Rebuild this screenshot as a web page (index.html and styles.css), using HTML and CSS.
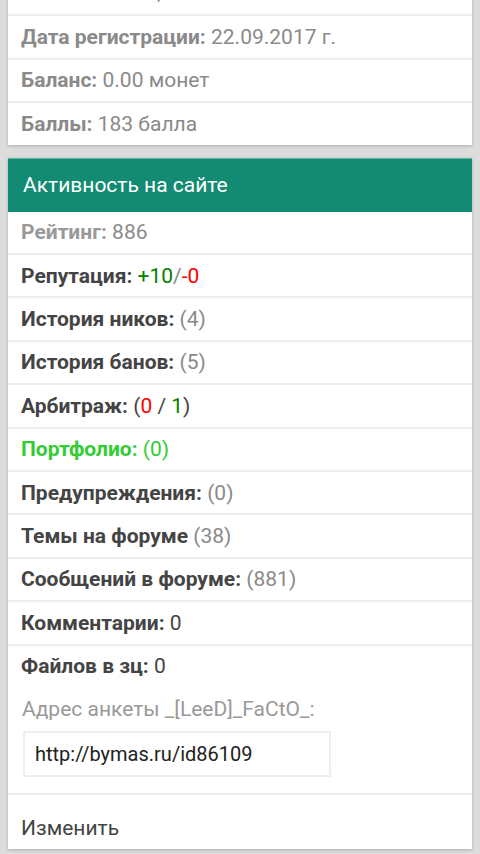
FILE: index.html
```html
<!DOCTYPE html>
<html lang="ru">
<head>
<meta charset="utf-8">
<title>Анкета</title>
<link rel="stylesheet" href="styles.css">
</head>
<body>
<div class="page">
  <div class="card card-top">
    <div class="row muted row-cut"><b>Имя:</b> Алексей, Минск</div>
    <div class="row muted"><b>Дата регистрации:</b> 22.09.2017 г.</div>
    <div class="row muted"><b>Баланс:</b> 0.00 монет</div>
    <div class="row muted"><b>Баллы:</b> 183 балла</div>
  </div>

  <div class="card">
    <div class="card-head">Активность на сайте</div>
    <div class="row first rating"><b>Рейтинг:</b> <span class="gray">886</span></div>
    <div class="row"><b>Репутация:</b> <span class="green">+10</span><span class="gray">/</span><span class="red">-0</span></div>
    <div class="row"><b>История ников:</b> <span class="gray">(4)</span></div>
    <div class="row"><b>История банов:</b> <span class="gray">(5)</span></div>
    <div class="row"><b>Арбитраж:</b> (<span class="red">0</span> / <span class="green">1</span>)</div>
    <div class="row lime"><b>Портфолио:</b> (0)</div>
    <div class="row"><b>Предупреждения:</b> <span class="gray">(0)</span></div>
    <div class="row"><b>Темы на форуме</b> <span class="gray">(38)</span></div>
    <div class="row"><b>Сообщений в форуме:</b> <span class="gray">(881)</span></div>
    <div class="row"><b>Комментарии:</b> 0</div>
    <div class="row"><b>Файлов в зц:</b> 0</div>
    <div class="address">
      <div class="address-label">Адрес анкеты _[LeeD]_FaCtO_:</div>
      <div class="address-input">http://bymas.ru/id86109</div>
    </div>
    <div class="row edit">Изменить</div>
  </div>
</div>
</body>
</html>
```

FILE: styles.css
```css
html, body {
  margin: 0;
  padding: 0;
  background: #dcdcdc;
}
body {
  font-family: Roboto, "Noto Sans", "Liberation Sans", sans-serif;
  font-size: 21px;
  color: #444;
  overflow: hidden;
}
.page {
  padding: 0 8px;
}
.card {
  background: #fff;
  box-shadow: 0 1px 3px rgba(0, 0, 0, 0.22);
  margin-bottom: 13px;
}
.card-top {
  margin-top: -27px;
}
.row {
  padding: 8.5px 13px;
  line-height: 24.4px;
  border-top: 2px solid #eeeeee;
  white-space: nowrap;
}
.row-cut {
  padding-top: 6.5px;
  padding-bottom: 10.5px;
}
.card-top .row:first-child,
.row.first {
  border-top: none;
}
b {
  font-weight: 700;
}
.muted {
  color: #8a8a8a;
}
.rating b {
  color: #999;
}
.gray {
  color: #8a8a8a;
}
.green {
  color: #008000;
}
.red {
  color: #ff0000;
}
.lime {
  color: #33cc33;
}
.card-head {
  background: #128b72;
  color: #fff;
  font-size: 21px;
  line-height: 24px;
  padding: 14.5px 15px;
  border-top: 1px solid #5fb3a2;
}
.address {
  padding: 10px 15px 16px;
}
.address-label {
  color: #999;
  line-height: 24.4px;
  margin-left: -1px;
}
.address-input {
  margin-top: 9.6px;
  width: 284px;
  border: 2px solid #eeeeee;
  padding: 10px 10px;
  font-size: 20px;
  line-height: 22px;
  color: #222;
}
.edit {
  color: #444;
  padding-top: 21px;
}
```
